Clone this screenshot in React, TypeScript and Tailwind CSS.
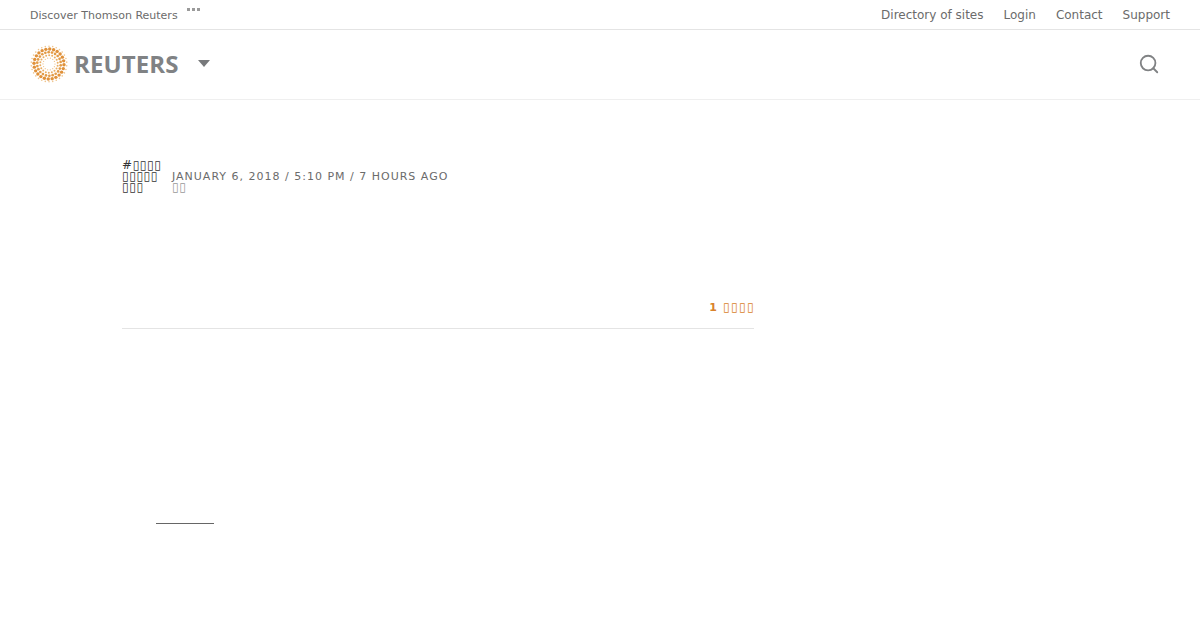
import { Search } from 'lucide-react';

const rings = [
    { r: 17.8, size: 0.8, count: 30, color: '#f0c690' },
    { r: 15, size: 1.7, count: 24, color: '#e0913a' },
    { r: 11.8, size: 1.35, count: 22, color: '#e39c48' },
    { r: 8.8, size: 1, count: 18, color: '#e9ae64' },
    { r: 6, size: 0.65, count: 14, color: '#f0c38c' },
];

const box = '▯';

function Logo() {
    return (
        <svg width="38" height="38" viewBox="-19 -19 38 38" className="shrink-0">
            {rings.map((ring) =>
                Array.from({ length: ring.count }).map((_, i) => {
                    const a = (i / ring.count) * Math.PI * 2 + ring.r * 0.3;
                    return (
                        <circle
                            key={`${ring.r}-${i}`}
                            cx={Math.cos(a) * ring.r}
                            cy={Math.sin(a) * ring.r}
                            r={ring.size}
                            fill={ring.color}
                        />
                    );
                })
            )}
        </svg>
    );
}

function App() {
    return (
        <div className="h-[630px] bg-white font-['DejaVu_Sans',sans-serif] overflow-hidden">
            {/* Top bar */}
            <div className="h-[30px] border-b border-[#e4e4e4] pl-[30px] pr-[30px] flex items-center justify-between text-[#6b6b6b]">
                <div className="flex items-start pt-[3px]">
                    <span className="text-[11px]">Discover Thomson Reuters</span>
                    <span className="ml-[9px] flex gap-[2px]">
                        <span className="w-[3px] h-[3px] bg-[#9a9a9a]"></span>
                        <span className="w-[3px] h-[3px] bg-[#9a9a9a]"></span>
                        <span className="w-[3px] h-[3px] bg-[#9a9a9a]"></span>
                    </span>
                </div>
                <div className="flex gap-[20px] text-[12px]">
                    <a href="#">Directory of sites</a>
                    <a href="#">Login</a>
                    <a href="#">Contact</a>
                    <a href="#">Support</a>
                </div>
            </div>
            {/* Header */}
            <div className="h-[70px] border-b border-[#efefef] pl-[30px] pr-[40px] flex items-center justify-between">
                <div className="flex items-center -mt-[2px]">
                    <Logo />
                    <span className="ml-[6px] font-['Open_Sans',sans-serif] font-bold text-[24px] tracking-[0.1px] text-[#808284]">REUTERS</span>
                    <span className="ml-[19px] w-0 h-0 border-x-[6px] border-x-transparent border-t-[7px] border-t-[#77797b]"></span>
                </div>
                <Search size={22} strokeWidth={2} className="text-[#808284] -mt-[2px]" />
            </div>
            {/* Article */}
            <div className="w-[632px] ml-[122px] pt-[60px]">
                <div className="flex items-end h-[33px]">
                    <div className="w-[50px] text-[12px] leading-[11px] tracking-[0.6px] text-[#333333]">
                        <div>#{box.repeat(4)}</div>
                        <div>{box.repeat(5)}</div>
                        <div>{box.repeat(3)}</div>
                    </div>
                    <div className="text-[#6b6b6b]">
                        <div className="text-[11px] tracking-[1px] leading-[11px]">JANUARY 6, 2018 / 5:10 PM / 7 HOURS AGO</div>
                        <div className="text-[#999999] text-[12px] leading-[11px] tracking-[0.6px]">{box.repeat(2)}</div>
                    </div>
                </div>
                <div className="mt-[107px] h-[29px] border-b border-[#e4e4e4] flex justify-end text-[#d9822b]">
                    <span className="font-bold text-[11px] mr-[6px] leading-[15px]">1</span>
                    <span className="text-[12px] leading-[15px] tracking-[1.4px] -mr-[1px]">{box.repeat(4)}</span>
                </div>
                <div className="mt-[194px] ml-[34px] w-[58px] border-b border-[#666666]"></div>
            </div>
        </div>
    );
}

export default App;
